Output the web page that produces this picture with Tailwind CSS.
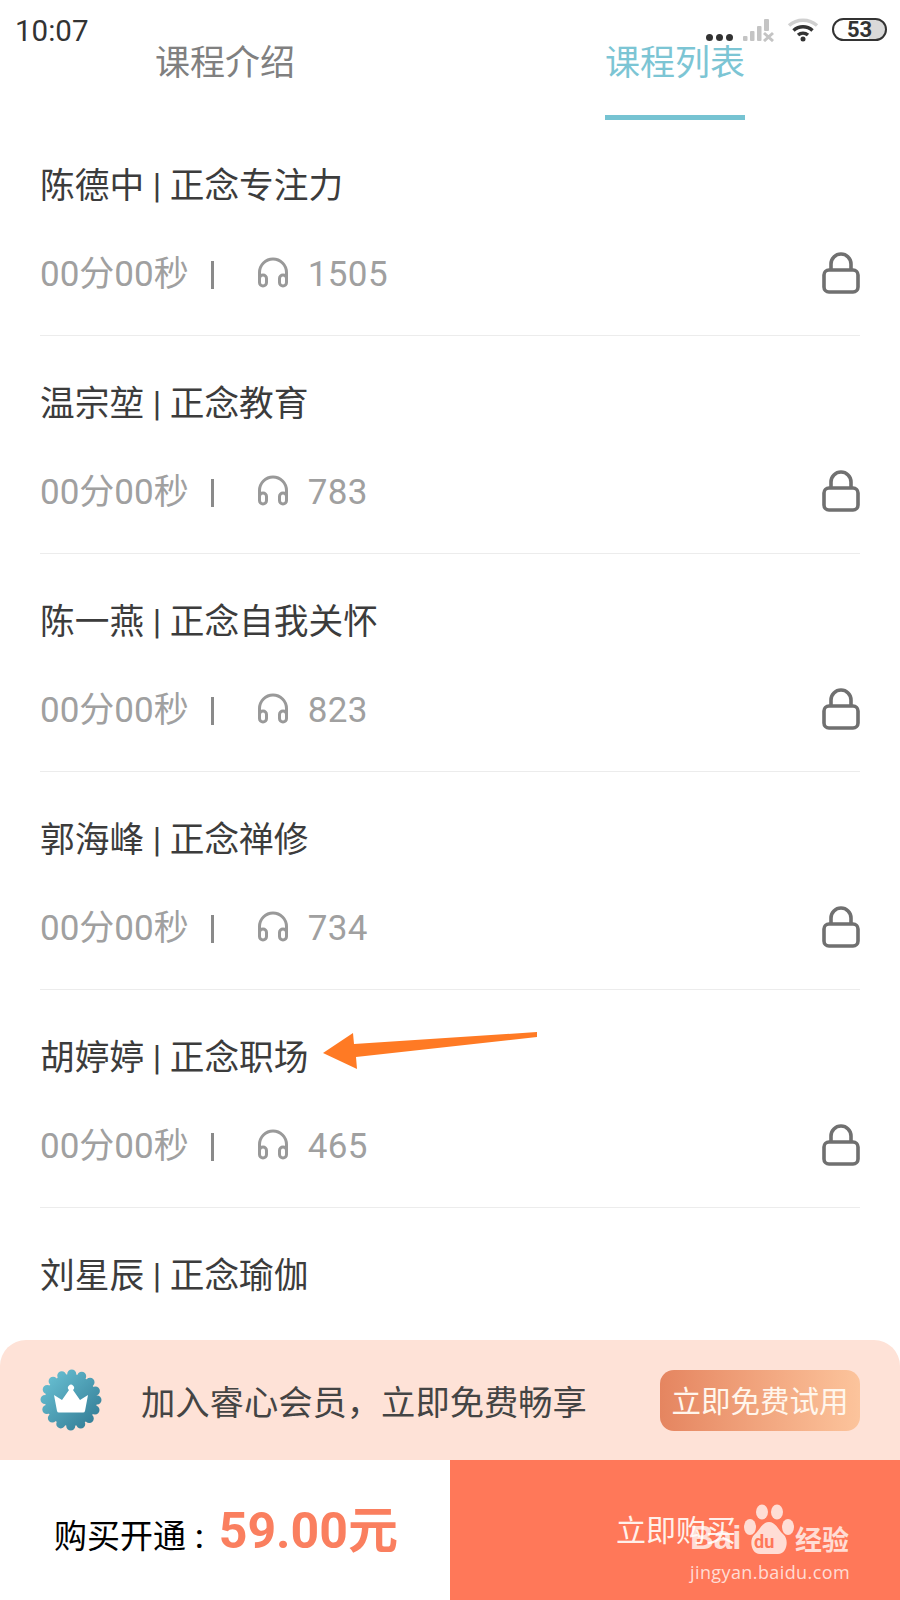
<!DOCTYPE html>
<html lang="zh-CN">
<head>
    <meta charset="UTF-8">
    <meta name="viewport" content="width=device-width, initial-scale=1.0">
    <title>课程列表</title>
    <script src="https://cdn.jsdelivr.net/npm/@tailwindcss/browser@4"></script>
</head>
<body class="bg-white font-[Roboto,'Noto_Sans_CJK_SC',sans-serif]">
<div class="relative w-[900px] h-[1600px] overflow-hidden bg-white">

    <!-- Status bar -->
    <div class="absolute top-0 left-0 w-full h-[60px] z-10">
        <span class="absolute left-[15px] top-[13px] text-[29.5px] leading-[36px] text-[#333]">10:07</span>
        <div class="absolute left-[706px] top-[34px] flex gap-[3px]">
            <span class="w-[7px] h-[7px] rounded-full bg-[#333]"></span>
            <span class="w-[7px] h-[7px] rounded-full bg-[#333]"></span>
            <span class="w-[7px] h-[7px] rounded-full bg-[#333]"></span>
        </div>
        <svg class="absolute left-[742px] top-[18px]" width="33" height="24" viewBox="0 0 33 24" fill="#c4c4c4">
            <rect x="1" y="18" width="4.5" height="5" rx="1"/>
            <rect x="8" y="13" width="4.5" height="10" rx="1"/>
            <rect x="15" y="8" width="4.5" height="15" rx="1"/>
            <rect x="22" y="1" width="5" height="12" rx="1"/>
            <path d="M22 15l9 8M31 15l-9 8" stroke="#c4c4c4" stroke-width="3" fill="none"/>
        </svg>
        <svg class="absolute left-[787px] top-[18px]" width="32" height="24" viewBox="0 0 32 24" fill="none">
            <path d="M2 7.5C10 0.5 22 0.5 30 7.5" stroke="#d0d0d0" stroke-width="3.5"/>
            <path d="M6.5 12.5C12 7.5 20 7.5 25.5 12.5" stroke="#333" stroke-width="3.5"/>
            <path d="M11 17C14 14.5 18 14.5 21 17" stroke="#333" stroke-width="3.5"/>
            <circle cx="16" cy="21" r="2.5" fill="#333"/>
        </svg>
        <div class="absolute left-[832px] top-[18px] w-[55px] h-[23px] rounded-full border-2 border-[#333] overflow-hidden flex items-center justify-center bg-[linear-gradient(to_right,white_68%,#d9d9d9_68%)]">
            <span class="text-[22px] leading-none font-bold text-[#333]">53</span>
        </div>
    </div>

    <!-- Tabs -->
    <div class="grid grid-cols-2 h-[120px]">
        <div class="flex justify-center pt-[40px]">
            <span class="text-[35px] leading-[48px] text-[#808080]">课程介绍</span>
        </div>
        <div class="relative flex justify-center pt-[40px]">
            <span class="text-[35px] leading-[48px] text-[#7cc5d4]">课程列表</span>
            <span class="absolute left-[155px] bottom-0 w-[140px] h-[5px] bg-[#76c3d2]"></span>
        </div>
    </div>

    <!-- Course list -->
    <div id="courseList" class="px-[40px] -mt-[2px]"></div>

    <!-- Annotation arrow -->
    <svg class="absolute left-[320px] top-[1028px]" width="220" height="44" viewBox="320 1028 220 44">
        <polygon points="323,1053 353,1033 354,1044 537,1032 537,1037 356,1057 357,1069" fill="#ff7a24"/>
    </svg>

    <!-- Bottom panel -->
    <div class="absolute left-0 bottom-0 w-full z-10">
        <div class="h-[120px] rounded-t-[26px] bg-[#fee2d7] flex items-center pl-[40px] pr-[40px]">
            <svg width="62" height="62" viewBox="0 0 62 62" class="shrink-0">
                <defs>
                    <linearGradient id="badge" gradientUnits="userSpaceOnUse" x1="8" y1="8" x2="54" y2="54">
                        <stop offset="0" stop-color="#66bdd0"/>
                        <stop offset="1" stop-color="#357f98"/>
                    </linearGradient>
                </defs>
                <circle cx="31" cy="31" r="26" fill="url(#badge)"/>
                <circle cx="31" cy="31" r="26" fill="none" stroke="url(#badge)" stroke-width="9" stroke-linecap="round" stroke-dasharray="0 10.21"/>
                <path d="M14 26l8 5 7-10a3 3 0 1 1 4 0l7 10 8-5-3 16a2 2 0 0 1-2 1.5H19a2 2 0 0 1-2-1.5z" fill="#fff"/>
            </svg>
            <span class="ml-[39px] mt-[6px] text-[34.3px] leading-none text-[#444]">加入睿心会员，立即免费畅享</span>
            <div class="ml-auto w-[200px] h-[61px] rounded-[14px] bg-gradient-to-r from-[#e58560] to-[#fcc49c] flex items-center justify-center">
                <span class="mt-[5px] text-[29.5px] leading-none text-[#fff6ec]">立即免费试用</span>
            </div>
        </div>
        <div class="grid grid-cols-2 h-[140px]">
            <div class="bg-white flex items-center pl-[54px]">
                <span class="text-[33px] leading-none text-black mt-[12px]">购买开通</span>
                <span class="ml-[9px] mt-[12px] text-[33px] leading-none font-medium text-black">:</span>
                <span class="ml-[15px] mt-[2px] text-[50px] leading-none font-bold text-[#fa7f5f]">59.00元</span>
            </div>
            <div class="relative bg-[#ff7859]">
                <span class="absolute left-[166px] top-[53px] text-[30px] leading-[36px] text-[#fff0ea]">立即购买</span>
            </div>
        </div>
    </div>

    <!-- Baidu watermark -->
    <div class="absolute left-[690px] top-[1504px] w-[165px] h-[80px] z-20 text-white/75">
        <span class="absolute left-0 top-[16px] text-[33px] leading-[36px] font-bold font-['Liberation_Sans',sans-serif]">Bai</span>
        <svg class="absolute left-[54px] top-0" width="50" height="52" viewBox="0 0 50 52" fill="currentColor">
            <ellipse cx="18" cy="8" rx="6" ry="7.5"/>
            <ellipse cx="33" cy="8" rx="6" ry="7.5"/>
            <ellipse cx="6" cy="23" rx="6" ry="8"/>
            <ellipse cx="44" cy="23" rx="6" ry="8"/>
            <path d="M25 18c-7 0-9 8-15 13-5 5-3 19 6 19h18c9 0 11-14 6-19-6-5-8-13-15-13z"/>
        </svg>
        <span class="absolute left-[64px] top-[28px] text-[18px] leading-[20px] font-bold text-[#ff7859]">du</span>
        <span class="absolute left-[105px] top-[21px] text-[27px] leading-[32px] font-bold">经验</span>
        <span class="absolute left-0 top-[57px] text-[18px] leading-[22px] tracking-[0.4px] font-['Open_Sans',sans-serif]">jingyan.baidu.com</span>
    </div>
</div>

<script>
    // Course rows
    const courses = [
        { title: '陈德中 | 正念专注力', plays: 1505 },
        { title: '温宗堃 | 正念教育', plays: 783 },
        { title: '陈一燕 | 正念自我关怀', plays: 823 },
        { title: '郭海峰 | 正念禅修', plays: 734 },
        { title: '胡婷婷 | 正念职场', plays: 465 },
        { title: '刘星辰 | 正念瑜伽', plays: 0 }
    ];

    const headphones = `
        <svg width="32" height="31" viewBox="0 0 32 31" fill="none" stroke="#999" stroke-width="3">
            <path d="M2.5 22V15.5a13.5 13.5 0 0 1 27 0V22"/>
            <rect x="2.5" y="18" width="7" height="11" rx="3.5"/>
            <rect x="22.5" y="18" width="7" height="11" rx="3.5"/>
        </svg>`;

    const lock = `
        <svg width="38" height="42" viewBox="0 0 38 42" fill="none" stroke="#707070" stroke-width="3.6">
            <path d="M9 18V12a10 10 0 0 1 20 0v6"/>
            <rect x="2" y="18" width="34" height="22" rx="5"/>
        </svg>`;

    document.getElementById('courseList').innerHTML = courses.map(course => `
        <div class="h-[218px] border-b border-[#ececec] pt-[44px]">
            <div class="text-[34.7px] leading-[48px] text-[#3c3c3c]">${course.title}</div>
            ${course.plays ? `
            <div class="mt-[41px] flex items-center h-[48px] text-[35px] text-[#a0a0a0]">
                <span class="leading-[48px]">00分00秒</span>
                <span class="ml-[22px] w-[3px] h-[28px] bg-[#8a8a8a]"></span>
                <span class="ml-[43px] -mt-[6px]">${headphones}</span>
                <span class="ml-[19px] leading-[48px] tracking-[0.4px]">${course.plays}</span>
                <span class="ml-auto -mt-[4px]">${lock}</span>
            </div>` : ''}
        </div>
    `).join('');
</script>
</body>
</html>
